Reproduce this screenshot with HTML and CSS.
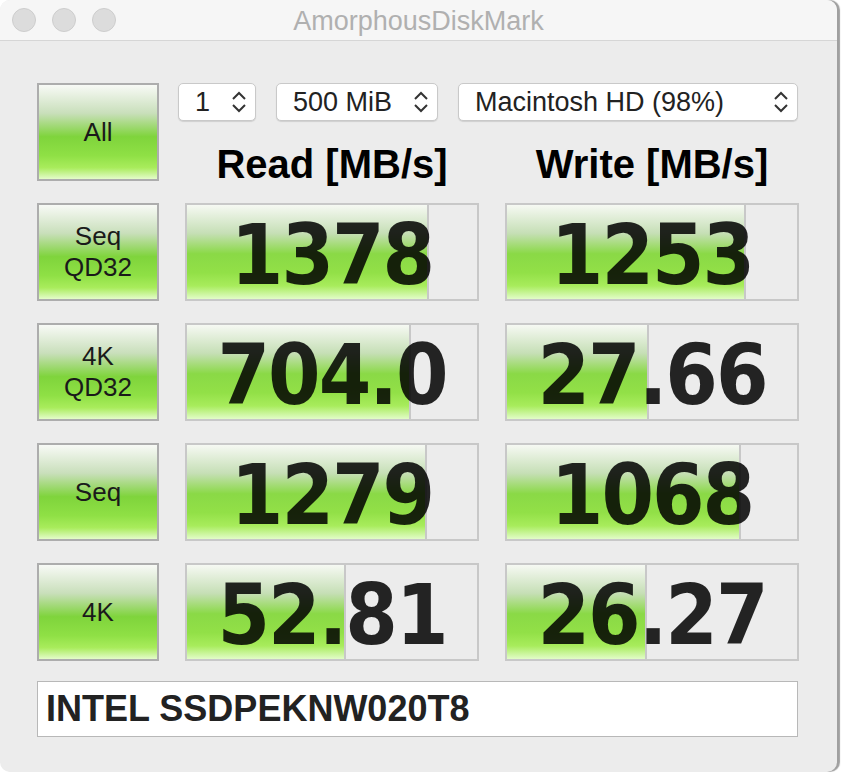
FILE: index.html
```html
<!doctype html>
<html lang="en">
<head>
    <meta charset="utf-8">
    <title>AmorphousDiskMark</title>
    <link rel="stylesheet" href="styles.css">
</head>
<body>
	<div class="ventana">
		<div class="barraTitulo">
			<div class="semaforo">
				<span class="luz"></span>
				<span class="luz"></span>
				<span class="luz"></span>
			</div>
			<div class="titulo">AmorphousDiskMark</div>
			<div></div>
		</div>

		<div class="contenido">
			<div class="tabla">
				<div class="boton">All</div>
				<div class="cabecera">
					<div class="selectores">
						<div class="selector sel1"><span>1</span>
							<svg width="16" height="24" viewBox="0 0 16 24"><polyline points="2,9 8,3 14,9" /><polyline points="2,15 8,21 14,15" /></svg>
						</div>
						<div class="selector sel2"><span>500 MiB</span>
							<svg width="16" height="24" viewBox="0 0 16 24"><polyline points="2,9 8,3 14,9" /><polyline points="2,15 8,21 14,15" /></svg>
						</div>
						<div class="selector sel3"><span>Macintosh HD (98%)</span>
							<svg width="16" height="24" viewBox="0 0 16 24"><polyline points="2,9 8,3 14,9" /><polyline points="2,15 8,21 14,15" /></svg>
						</div>
					</div>
					<div class="titulos">
						<h2>Read [MB/s]</h2>
						<h2>Write [MB/s]</h2>
					</div>
				</div>

				<div class="boton">Seq<br>QD32</div>
				<div class="celda"><div class="barra" style="width: 83.4%"></div><div class="numero">1378</div></div>
				<div class="celda"><div class="barra" style="width: 82.4%"></div><div class="numero">1253</div></div>

				<div class="boton">4K<br>QD32</div>
				<div class="celda"><div class="barra" style="width: 77.2%"></div><div class="numero">704.0</div></div>
				<div class="celda"><div class="barra" style="width: 49%"></div><div class="numero">27.66</div></div>

				<div class="boton">Seq</div>
				<div class="celda"><div class="barra" style="width: 82.8%"></div><div class="numero">1279</div></div>
				<div class="celda"><div class="barra" style="width: 80.7%"></div><div class="numero">1068</div></div>

				<div class="boton">4K</div>
				<div class="celda"><div class="barra" style="width: 54.8%"></div><div class="numero">52.81</div></div>
				<div class="celda"><div class="barra" style="width: 48.3%"></div><div class="numero">26.27</div></div>
			</div>

			<div class="disco">INTEL SSDPEKNW020T8</div>
		</div>
	</div>
</body>
</html>
```

FILE: styles.css
```css
body{
	margin: 0;
	background-color: #fff;
	font-family: "Liberation Sans", Arial, sans-serif;
}
.ventana{
	width: 837px;
	height: 772px;
	background-color: #ececec;
	border-radius: 10px;
	overflow: hidden;
	box-shadow: 3px 0 1px #a0a0a0;
}
.barraTitulo{
	height: 40px;
	background-color: #f6f6f6;
	border-bottom: 1px solid #d6d6d6;
	display: grid;
	grid-template-columns: 1fr auto 1fr;
	align-items: center;
}
.semaforo{
	display: flex;
	gap: 16px;
	padding-left: 12px;
}
.luz{
	width: 22px;
	height: 22px;
	border-radius: 50%;
	background-color: #dcdcdc;
	border: 1px solid #cdcdcd;
}
.titulo{
	color: #b0b0b0;
	font-size: 27px;
	padding-top: 2px;
}
.contenido{
	padding: 42px 0 0 37px;
}
.tabla{
	display: grid;
	grid-template-columns: 122px 294px 294px;
	grid-template-rows: 98px 98px 98px 98px 98px;
	column-gap: 26px;
	row-gap: 22px;
}
.boton{
	box-sizing: border-box;
	border: 2px solid #adadad;
	background: linear-gradient(to bottom, #f8faf6 0%, #c9dfbb 30%, #7fd43c 55%, #8fe045 75%, #a9ec5c 88%, #e4fcca 100%);
	color: #1a1a1a;
	font-size: 26px;
	line-height: 31px;
	display: flex;
	align-items: center;
	justify-content: center;
	text-align: center;
}
.cabecera{
	grid-column: 2 / 4;
}
.selectores{
	display: flex;
	gap: 20px;
	margin-left: -7px;
}
.selector{
	box-sizing: border-box;
	height: 38px;
	background-color: #fff;
	border: 1px solid #c9c9c9;
	border-radius: 5px;
	box-shadow: 0 1px 1px #d0d0d0;
	display: flex;
	align-items: center;
	justify-content: space-between;
	padding: 0 8px 0 16px;
	color: #222;
	font-size: 27px;
}
.selector svg{
	fill: none;
	stroke: #333;
	stroke-width: 2;
}
.sel1{
	width: 78px;
}
.sel2{
	width: 162px;
}
.sel3{
	width: 340px;
}
.titulos{
	display: grid;
	grid-template-columns: 294px 294px;
	column-gap: 26px;
	margin-top: 21px;
}
h2{
	margin: 0;
	text-align: center;
	font-size: 40px;
	line-height: 44px;
	color: #000;
}
.celda{
	box-sizing: border-box;
	border: 2px solid #c8c8c8;
	display: grid;
	align-items: center;
}
.barra{
	grid-area: 1 / 1;
	align-self: stretch;
	box-sizing: border-box;
	border-right: 2px solid #c8c8c8;
	background: linear-gradient(to bottom, #f6f9f3 0%, #c6dfb6 30%, #8ad946 52%, #92e047 72%, #a8ec5c 86%, #e2fcc8 100%);
}
.numero{
	grid-area: 1 / 1;
	text-align: center;
	font-family: "DejaVu Sans Condensed", "DejaVu Sans", sans-serif;
	font-stretch: semi-condensed;
	font-weight: bold;
	font-size: 84px;
	letter-spacing: -2px;
	line-height: 1;
	color: rgba(0, 0, 0, 0.85);
	padding-top: 6px;
}
.disco{
	box-sizing: border-box;
	margin-top: 20px;
	width: 761px;
	height: 56px;
	background-color: #fff;
	border: 1px solid #b8b8b8;
	padding-left: 8px;
	font-size: 36px;
	font-weight: bold;
	line-height: 54px;
	color: #222;
}
```
